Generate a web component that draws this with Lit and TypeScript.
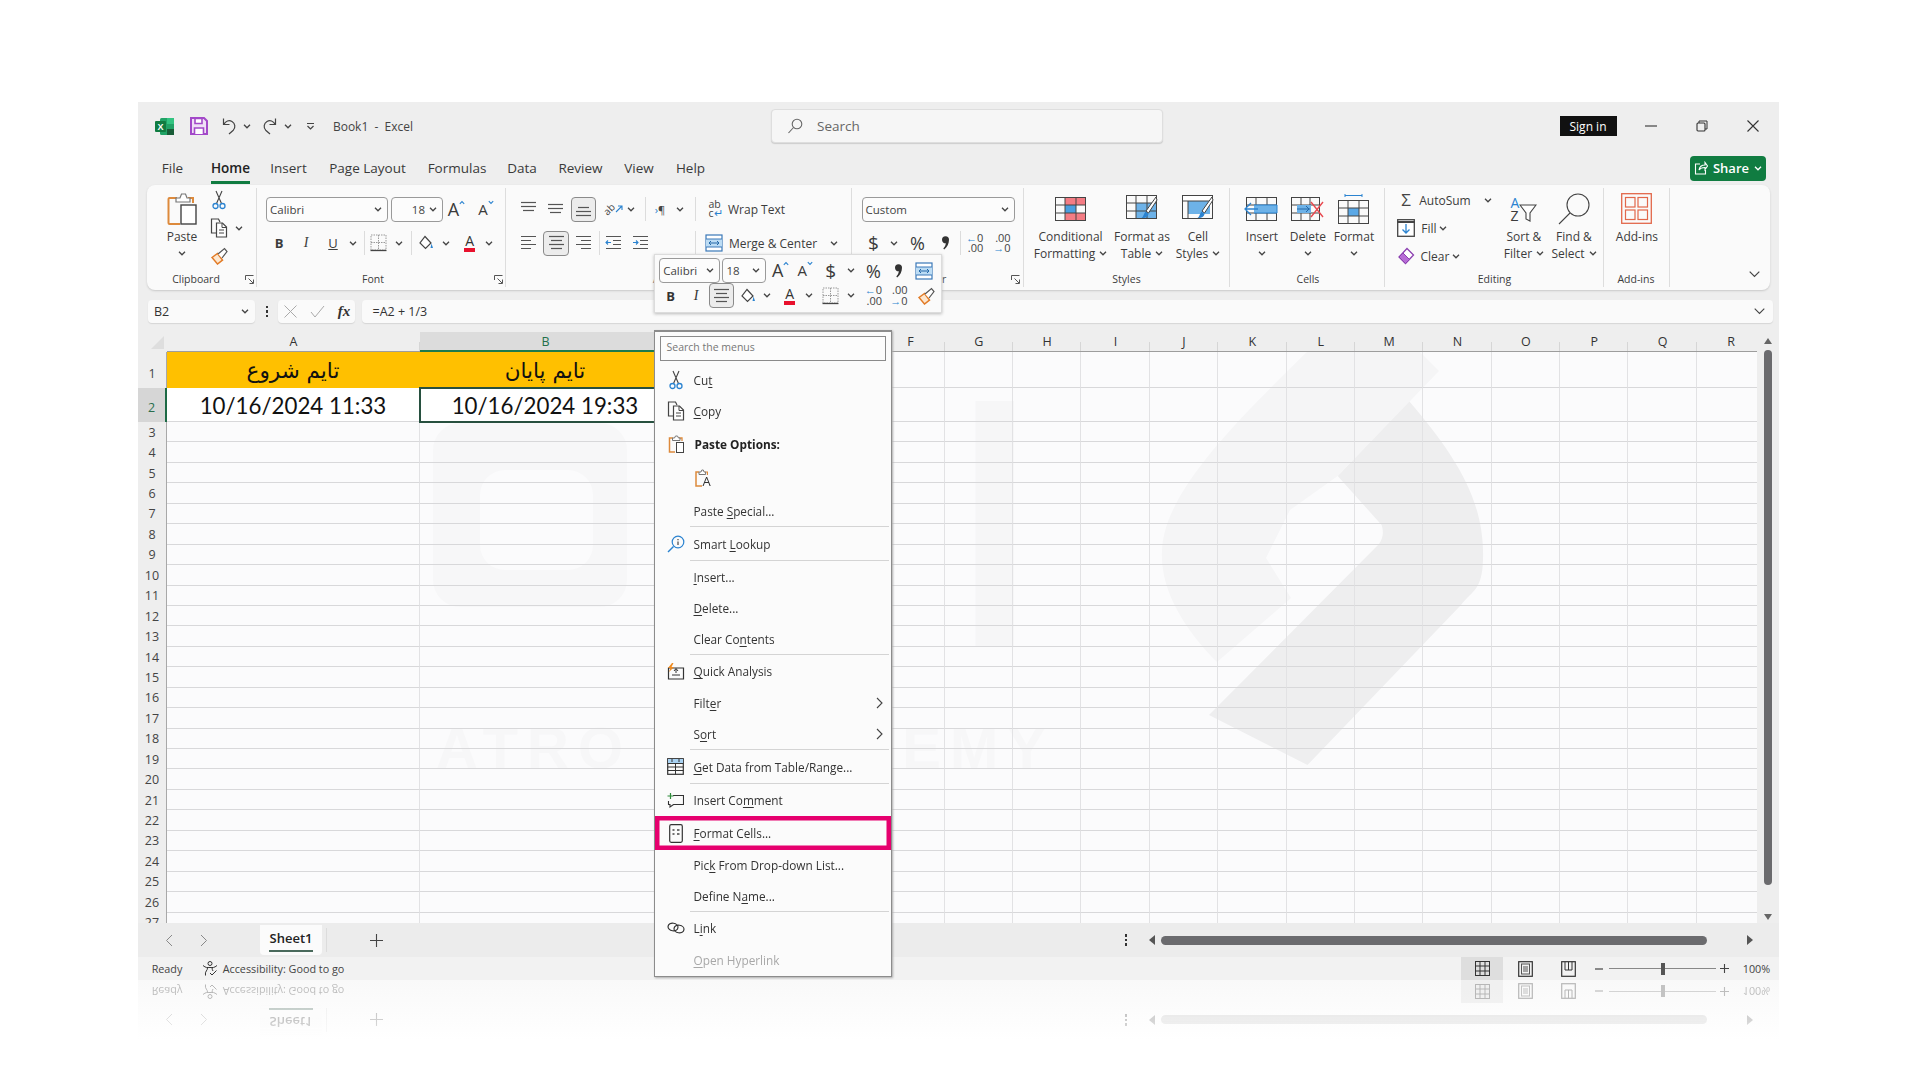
import { LitElement, html, css, svg } from "lit";
import { customElement } from "lit/decorators.js";

const BLUE = "#2b83d0";
const I = (w: number, h: number, c: any) =>
  html`<svg width=${w} height=${h} viewBox="0 0 ${w} ${h}" fill="none">${c}</svg>`;

type It = [number, number, any];
const place = (start: number, items: It[]) => {
  let cur = start;
  return items.map(([c, w, t]) => {
    const ml = c - w / 2 - cur;
    cur = c + w / 2;
    return html`<span class="cell" style="width:${w}px;margin-left:${ml.toFixed(1)}px">${t}</span>`;
  });
};
const CH = I(8, 5, svg`<path d="M1 .8l3 3 3-3" stroke="#444" stroke-width="1.3"/>`);
const CHW = I(8, 5, svg`<path d="M1 .8l3 3 3-3" stroke="#fff" stroke-width="1.3"/>`);

const excel = I(19, 17, svg`
  <rect x="5" width="14" height="17" rx="1.5" fill="#21a366"/>
  <rect x="12" width="7" height="6" fill="#33c481"/><rect x="12" y="11" width="7" height="6" fill="#185c37"/>
  <rect y="3" width="11" height="11" rx="1" fill="#107c41"/>
  <text x="5.5" y="11.5" text-anchor="middle" font-size="9" font-weight="700" font-family="Liberation Sans" fill="#fff">X</text>`);
const save = I(18, 18, svg`
  <path d="M1 1h13l3 3v13H1z" fill="#efe0f6" stroke="#a349c9" stroke-width="2"/>
  <path d="M5 1.500h7v5H5zM4.500 17v-6h9v6" fill="#fff" stroke="#a349c9" stroke-width="1.6"/>`);
const undo = I(18, 18, svg`<path d="M3.500 1.500v6h6M3.800 7.500C5.500 4 9 2.800 12 4.500c3.300 2 3.700 6 1.300 8.700L9 17" stroke="#444" stroke-width="1.200"/>`);
const redo = I(18, 18, svg`<path d="M14.500 1.500v6h-6M14.200 7.500C12.500 4 9 2.800 6 4.500c-3.300 2-3.700 6-1.300 8.700L9 17" stroke="#444" stroke-width="1.200"/>`);
const qat = I(9, 9, svg`<path d="M1 1.500h7M1.500 4l3 3 3-3" stroke="#444" stroke-width="1.200"/>`);

const pasteBig = I(30, 33, svg`
  <path d="M10 6H2.500a1 1 0 0 0-1 1v24a1 1 0 0 0 1 1H13" stroke="#dd8a3c" stroke-width="2"/>
  <path d="M21 6h5v5" stroke="#dd8a3c" stroke-width="2"/>
  <path d="M9 6h4l1.500-4h4L20 6h3v4H9z" fill="#fff" stroke="#777" stroke-width="1.200"/>
  <rect x="14" y="13" width="15" height="19" fill="#fff" stroke="#444" stroke-width="1.400"/>`);
const cut = I(14, 20, svg`
  <path d="M4 1l5.500 12.500M10 1L4.500 13.500" stroke="#444" stroke-width="1.100"/>
  <circle cx="3.500" cy="16" r="2.500" stroke="${BLUE}" stroke-width="1.300"/><circle cx="10.500" cy="16" r="2.500" stroke="${BLUE}" stroke-width="1.300"/>`);
const copy = I(18, 20, svg`
  <path d="M6 15H1.500V1h7l1.500 3" stroke="#444" stroke-width="1.200"/>
  <path d="M6.500 5h6l4 4v10h-10z" fill="#fff" stroke="#444" stroke-width="1.200"/>
  <path d="M12 5v4.500h4.500M9 12h5M9 15h5" stroke="#444"/>`);
const painter = I(18, 18, svg`
  <path d="M2 10.500l5.500-4 5 6.500-5 4z" fill="#fde7cf" stroke="#e27b26" stroke-width="1.500"/>
  <path d="M8 7l6.500-5.500 2.500 3L12 11" fill="#fff" stroke="#555" stroke-width="1.200"/>`);
const borders = I(17, 18, svg`
  <path d="M1 1h15v15H1zM8.500 1v15M1 8.500h15" stroke="#999" stroke-dasharray="1.500 1"/>
  <path d="M.5 16.500h16" stroke="#444" stroke-width="1.300"/>`);
const fill = I(16, 16, svg`
  <path d="M7 1.500L13 8l-5.500 5.500L2 8z" fill="#fff" stroke="#444" stroke-width="1.200"/>
  <path d="M12.500 13l1-4.500 1.500 4.500z" fill="${BLUE}"/>`);
const lines = (rows: [number, number][], w = 17, h = 16) =>
  I(w, h, svg`${rows.map(([y, x]) => svg`<path d="M${x} ${y}H${w - x}" stroke="#555" stroke-width="1.200"/>`)}`);
const ltop = lines([[1.5, 1], [5.5, 1], [9.5, 3]]);
const lmid = lines([[3.5, 1], [7.5, 1], [11.5, 3]]);
const lbot = lines([[6.5, 3], [10.5, 1], [14.5, 1]]);
const lcen = lines([[1.5, 1], [5.5, 3], [9.5, 1], [13.5, 3]]);
const leftL = I(17, 16, svg`<path d="M1 1.500h15M1 5.500h10M1 9.500h15M1 13.500h10" stroke="#555" stroke-width="1.200"/>`);
const rightL = I(17, 16, svg`<path d="M1 1.500h15M6 5.500h10M1 9.500h15M6 13.500h10" stroke="#555" stroke-width="1.200"/>`);
const indL = I(17, 16, svg`<path d="M1 1.500h15M8 5.500h8M8 9.500h8M1 13.500h15" stroke="#555" stroke-width="1.100"/><path d="M6 7.500H1M3 5.500l-2 2 2 2" stroke="${BLUE}" stroke-width="1.100"/>`);
const indR = I(17, 16, svg`<path d="M1 1.500h15M8 5.500h8M8 9.500h8M1 13.500h15" stroke="#555" stroke-width="1.100"/><path d="M1 7.500h5M4 5.500l2 2-2 2" stroke="${BLUE}" stroke-width="1.100"/>`);
const merge = I(18, 18, svg`
  <rect x="1" y="1" width="16" height="16" fill="#fff" stroke="#3a78b8" stroke-width="1.200"/>
  <rect x="1" y="5" width="16" height="8" fill="#bcdcf4"/><path d="M1 5h16M1 13h16" stroke="#3a78b8"/>
  <path d="M4 9h10M6 7l-2 2 2 2M12 7l2 2-2 2" stroke="#2468a8"/>`);
const comma = I(9, 14, svg`<path d="M1 3.800a3.500 3.500 0 1 1 7 0c0 4-1.800 7.200-4.800 9.700l-.9-1c1.400-1.400 2.300-3 2.500-5.200A3.500 3.500 0 0 1 1 3.800z" fill="#333"/>`);
const gridLines = (w: number, h: number, vs: number[], hs: number[]) => svg`
  <rect x=".5" y=".5" width=${w - 1} height=${h - 1} stroke="#444"/>
  ${vs.map((x) => svg`<path d="M${x} 0V${h}" stroke="#444"/>`)}
  ${hs.map((y) => svg`<path d="M0 ${y}H${w}" stroke="#444"/>`)}`;
const brush = svg`<path d="M30 2L20 16l2.500 2L31 5z" fill="#fff" stroke="#444"/><path d="M19.500 16.500l3 2.500c-.5 3-3.500 4.500-7 4 2-1 2-4 4-6.500z" fill="${BLUE}"/>`;
const cfIcon = I(31, 24, svg`
  <rect x="10" y="0" width="20" height="8" fill="#f47c84"/><rect x="10" y="16" width="20" height="8" fill="#f47c84"/>
  <rect x="10" y="8" width="11" height="8" fill="#4a9fe0"/>${gridLines(31, 24, [10, 21], [8, 16])}`);
const tblIcon = I(32, 27, svg`
  <rect x="10" y="8" width="20" height="15" fill="#6db2e8"/>${gridLines(31, 24, [10, 21], [8, 16])}${brush}`);
const cellIcon = I(32, 27, svg`
  <rect x="1" y="1" width="29" height="6" fill="#fff"/><rect x="6" y="6" width="22" height="13" fill="#6db2e8"/>
  <rect x=".5" y=".5" width="30" height="23" stroke="#444"/><path d="M0 6h31M6 6v18" stroke="#444"/>${brush}`);
const insertIcon = I(35, 24, svg`
  <g transform="translate(2 0)">${gridLines(31, 24, [10, 21], [8, 16])}</g>
  <rect x="10" y="8" width="23" height="8" fill="#6db2e8"/><path d="M10 8h23v8H10" stroke="#2b83d0"/>
  <path d="M14 12H2M7 6l-6 6 6 6" stroke="${BLUE}" stroke-width="1.300"/>`);
const deleteIcon = I(33, 24, svg`
  ${gridLines(29, 24, [10, 19], [8, 16])}<rect x="6" y="8" width="14" height="8" fill="#6db2e8"/>
  <path d="M6 12h13M15 9l3 3-3 3" stroke="#2468a8"/><path d="M20 5l12 15M32 5L20 20" stroke="#e8484f" stroke-width="1.400"/>`);
const formatIcon = I(31, 30, svg`
  <path d="M7 1.500h17M7 0v3M24 0v3" stroke="#2b83d0"/>
  <g transform="translate(0 6)"><rect x="10" y="8" width="11" height="8" fill="#5aa8e6"/>${gridLines(31, 24, [10, 21], [8, 16])}</g>`);
const fillI = I(18, 18, svg`<rect x=".7" y=".7" width="16.600" height="16.600" fill="#fff" stroke="#444" stroke-width="1.300"/><path d="M0 3h18" stroke="#444" stroke-width="2"/><path d="M9 5v9M5.500 10.500L9 14l3.500-3.500" stroke="${BLUE}" stroke-width="1.300"/>`);
const clearI = I(18, 18, svg`<path d="M10 1.500l6.500 6.500-8 8.500L2 10z" fill="#fff" stroke="#8b3fb0" stroke-width="1.300"/><path d="M2 10l4-4 6.500 6.500-4 4z" fill="#b76cd6" stroke="#8b3fb0"/>`);
const funnel = I(18, 18, svg`<path d="M1 1h16l-6 8v8l-4-2V9z" fill="#fff" stroke="#444" stroke-width="1.100"/>`);
const findI = I(32, 32, svg`<circle cx="20" cy="12" r="11" stroke="#444" stroke-width="1.100"/><path d="M12 20L1 31" stroke="#444" stroke-width="1.100"/>`);
const addin = I(31, 31, svg`
  <rect x=".7" y=".7" width="29.600" height="29.600" stroke="#e2674a" stroke-width="1.300"/>
  <rect x="4.500" y="4.500" width="9.500" height="9.500" stroke="#e2674a" stroke-width="1.200"/><rect x="17" y="4.500" width="9.500" height="9.500" stroke="#e2674a" stroke-width="1.200"/>
  <rect x="4.500" y="17" width="9.500" height="9.500" stroke="#e2674a" stroke-width="1.200"/><rect x="17" y="17" width="9.500" height="9.500" stroke="#e2674a" stroke-width="1.200"/>`);
const launcher = I(9, 9, svg`<path d="M.5 5V.5H8.500M3.500 3.500L8 8M8.500 4.500v4h-4" stroke="#555"/>`);
const searchI = I(16, 16, svg`<circle cx="10" cy="6" r="4.800" stroke="#666" stroke-width="1.100"/><path d="M6.500 9.500L1.500 15" stroke="#666" stroke-width="1.100"/>`);
const shareI = I(14, 14, svg`<path d="M6 3H1.500v10h10V9M5 9c.5-3 2.500-5 6-5V1.500L13.500 5 11 8.500V6.500C8 6.500 6 7.500 5 9z" stroke="#fff" stroke-width="1.100"/>`);

const fa = (sz: string, up: boolean) => html`<span class="fa ${sz}">A${I(6, 5, svg`<path d="${up ? "M.8 3.800L3 1.500l2.200 2.300" : "M.8 1.200L3 3.500l2.200-2.300"}" stroke="${BLUE}" stroke-width="1.100"/>`)}</span>`;
const fc = html`<span class="fc">A</span>`;
const incD = html`<span class="dec"><span><b>←</b>0</span><span>.00</span></span>`;
const decD = html`<span class="dec"><span>.00</span><span><b>→</b>0</span></span>`;
const dollar = html`<span class="sym d">$</span>`;
const pct = html`<span class="sym p">%</span>`;
const vsep = html`<span class="vs"></span>`;
const sel = (t: any) => html`<span class="sel">${t}</span>`;
const box = (t: string, cls = "") => html`<span class="dd ${cls}"><span>${t}</span>${CH}</span>`;

const big = (icon: any, l1: string, l2?: string) => html`<span class="big"><span class="bi">${icon}</span>
  <span class="ln">${l1}</span><span class="ln">${l2 ? html`${l2} ` : ""}${CH}</span></span>`;

const wm = svg`
  <path d="M1409 401C1455 455 1485 500 1483 560C1482 590 1473 590 1461 605L1307.500 765L1209 715L1379 544C1383 538 1384 532 1381.600 525L1337.700 476z" fill="#eeeeef"/>
  <path d="M1360 300L1423 355L1439 371L1337.700 476L1290 510L1266 558L1291 598L1217 662C1185 630 1160 590 1162 551C1164 480 1270 390 1360 300z" fill="#f5f5f6"/>
  <rect x="975.600" y="401" width="38.400" height="245" fill="#f6f6f7"/>
  <path fill-rule="evenodd" d="M460 423H600a27 27 0 0 1 27 27V580a27 27 0 0 1-27 27H460a27 27 0 0 1-27-27V450a27 27 0 0 1 27-27zM505 470a25 25 0 0 0-25 25v50a25 25 0 0 0 25 25h63a25 25 0 0 0 25-25v-50a25 25 0 0 0-25-25z" fill="#f7f7f8"/>
  <text x="436" y="768" font-family="Liberation Sans" font-weight="700" font-size="58" letter-spacing="9" fill="#f7f7f8">ATRO</text>
  <text x="1055" y="768" text-anchor="end" font-family="Liberation Sans" font-weight="700" font-size="58" letter-spacing="9" fill="#f7f7f8">EMY</text>`;

const colNames = "ABCDEFGHIJKLMNOPQR".split("");
const hiddenCols = "CDE";

type MI = { t?: string; i?: any; h?: number; k?: string; arrow?: boolean };
const pasteSm = I(16, 18, svg`
  <path d="M5 3H1.500v14H7" stroke="#dd8a3c" stroke-width="1.500"/><path d="M11 3h3v3" stroke="#dd8a3c" stroke-width="1.300"/>
  <path d="M4.500 3h2l1-2h2l1 2h1.500v2.500h-7.500z" fill="#fff" stroke="#777"/><rect x="8.500" y="7.500" width="7" height="10" fill="#fff" stroke="#444"/>`);
const pasteA = html`<span class="pa">${I(13, 18, svg`<path d="M4 3H1v14h6" stroke="#dd8a3c" stroke-width="1.500"/><path d="M10 3h2.500v3" stroke="#dd8a3c" stroke-width="1.200"/><path d="M4 3h2l.8-2h1.500l.8 2h1.500v2.500H4z" fill="#fff" stroke="#777"/>`)}<span>A</span></span>`;
const lookI = I(18, 18, svg`<circle cx="11" cy="7" r="5.800" stroke="${BLUE}" stroke-width="1.200"/><path d="M6.500 11.500L1 17" stroke="${BLUE}" stroke-width="1.400"/><path d="M11 6.500v3.500M11 4v1.200" stroke="#444" stroke-width="1.200"/>`);
const quickI = I(18, 17, svg`<path d="M1.500 5h15v11h-15z" stroke="#333" stroke-width="1.200"/><path d="M5 12h8M9 6v4M7 8l2-2.500L11 8" stroke="#333"/><path d="M5 0L1 5h2.500L2 9l5-5H4.500L6.500 0z" fill="#ee8a1f"/>`);
const tableI = I(17, 17, svg`<rect x=".7" y=".7" width="15.600" height="15.600" stroke="#333" stroke-width="1.200"/><rect x="1" y="1" width="15" height="4.500" fill="#a9d2f2"/><path d="M.5 5.500h16M.5 9h16M.5 12.500h16M8.500 5.500v11M5 1v3M12 1v3" stroke="#333"/>`);
const commentI = I(17, 15, svg`<path d="M6 2.500h10.500v9H6.500L3 14v-2.500H1.500V8" stroke="#333" stroke-width="1.100"/><path d="M3.500 0v6M.5 3h6" stroke="#2e8b3a" stroke-width="1.200"/>`);
const fmtI = I(14, 19, svg`<rect x=".7" y=".7" width="12.600" height="17.600" rx="1.500" stroke="#333" stroke-width="1.200"/><path d="M3.500 6h2M3.500 10h2M8 6h2.500M8 10h2.500" stroke="#444" stroke-width="1.500"/>`);
const linkI = I(18, 12, svg`<ellipse cx="6" cy="5" rx="5" ry="3.800" transform="rotate(8 6 5)" stroke="#333" stroke-width="1.200"/><ellipse cx="12" cy="7" rx="5" ry="3.800" transform="rotate(8 12 7)" stroke="#333" stroke-width="1.200"/>`);

const menuData: MI[] = [
  { t: "Cu_t", i: cut, h: 31 },
  { t: "_Copy", i: copy, h: 31 },
  { t: "Paste Options:", i: pasteSm, h: 35, k: "head" },
  { i: pasteA, h: 34, k: "pi" },
  { t: "Paste _Special...", h: 31 },
  { k: "div" },
  { t: "Smart _Lookup", i: lookI, h: 33 },
  { k: "div" },
  { t: "_Insert...", h: 31 },
  { t: "_Delete...", h: 31 },
  { t: "Clear Co_ntents", h: 31 },
  { k: "div" },
  { t: "_Quick Analysis", i: quickI, h: 32 },
  { t: "Filt_er", h: 31, arrow: true },
  { t: "S_ort", h: 31, arrow: true },
  { k: "div" },
  { t: "_Get Data from Table/Range...", i: tableI, h: 33 },
  { k: "div" },
  { t: "Insert Co_mment", i: commentI, h: 32 },
  { t: "_Format Cells...", i: fmtI, h: 33.5, k: "hl" },
  { t: "Pic_k From Drop-down List...", h: 30.5 },
  { t: "Define N_ame...", h: 30.5 },
  { k: "div" },
  { t: "L_ink", i: linkI, h: 33 },
  { t: "_Open Hyperlink", h: 31, k: "off" },
];
const label = (t: string) => {
  const p = t.indexOf("_");
  if (p < 0) return t;
  return html`${t.slice(0, p)}<u>${t[p + 1]}</u>${t.slice(p + 2)}`;
};

@customElement("app-root")
export class AppRoot extends LitElement {
  static styles = css`
    :host { display: block; width: 1920px; height: 1080px; background: #fff; box-sizing: border-box; padding: 102px 141px 0 138px; overflow: hidden;
      font-family: "Open Sans", "Liberation Sans", sans-serif; color: #333; }
    .win { width: 1641px; height: 878px; background: #eeeeee; position: relative; display: flex; flex-direction: column; }
    .cell { display: inline-flex; flex: none; align-items: center; justify-content: center; white-space: nowrap; }
    .tr { display: flex; align-items: center; height: 34px; }
    /* title */
    .title { height: 48px; display: flex; align-items: center; font-size: 12px; color: #444; flex: none; }
    .search { display: flex; align-items: center; justify-content: flex-start; height: 34px; background: #f6f6f6; border: 1px solid #dedede; border-radius: 4px; box-sizing: border-box; padding-left: 15px; gap: 14px; color: #666; font-size: 13.5px; box-shadow: 0 1px 1px #ccc; }
    .signin { background: #111; color: #fff; font-size: 12px; height: 20px; }
    .tabs { height: 35px; padding-top: 1px; box-sizing: border-box; display: flex; align-items: center; font-size: 13.5px; color: #3a3a3a; flex: none; }
    .tabs .on { font-weight: 600; color: #222; position: relative; }
    .tabs .on::after { content: ""; position: absolute; left: 0; right: 0; bottom: -7px; height: 3px; background: #107c41; }
    .share { background: #107c41; color: #fff; height: 25px; border-radius: 4px; font-size: 13px; font-weight: 600; gap: 5px; }
    /* ribbon */
    .ribbon { margin: 0 9px; width: 1623px; height: 105px; flex: none; box-sizing: border-box; background: #fafafa; border-radius: 8px; box-shadow: 0 1px 2px #c8c8c8; padding: 3px 0; display: flex; font-size: 12px; color: #3c3c3c; position: relative; }
    .group { box-sizing: border-box; border-right: 1px solid #dddddd; height: 99px; padding-top: 4px; flex: none; }
    .top { height: 78px; display: flex; }
    .top > .cell { align-items: flex-start; }
    .gl { height: 18px; display: flex; align-items: center; font-size: 10.5px; color: #3c3c3c; }
    .stack { height: 84px; margin-top: -6px; display: flex; flex-direction: column; flex: none; }
    .stack > div { height: 28px; display: flex; align-items: center; }
    .big { display: flex; flex-direction: column; align-items: center; }
    .bi { height: 33px; margin-bottom: 3px; display: flex; align-items: center; justify-content: center; }
    .ln { height: 17px; line-height: 17px; display: flex; align-items: center; gap: 4px; white-space: nowrap; }
    .dd { display: flex; align-items: center; justify-content: space-between; width: 100%; height: 25px; box-sizing: border-box; border: 1px solid #9a9a9a; border-radius: 4px; background: #fcfcfc; padding: 0 5px 0 3px; font-size: 11.5px; color: #444; }
    .dd.r span { margin-left: auto; margin-right: 4px; }
    .vs { display: block; width: 1px; height: 24px; background: #dcdcdc; }
    .sel { display: flex; align-items: center; justify-content: center; width: 100%; height: 25px; border: 1px solid #8a8a8a; border-radius: 4px; background: #ececec; box-sizing: border-box; }
    .fa { display: inline-flex; align-items: flex-start; font-size: 18px; line-height: 19px; color: #3a3a3a; }
    .fa.s { font-size: 15px; align-items: flex-start; }
    .fc { display: block; font-size: 14px; line-height: 14px; border-bottom: 4px solid #e8112d; padding: 0 1px; color: #333; }
    .b { font-weight: 700; font-size: 13px; }
    .it { font-style: italic; font-family: "Liberation Serif", serif; font-size: 14px; }
    .un { text-decoration: underline; font-size: 13px; }
    .dec { display: flex; flex-direction: column; font-size: 11px; line-height: 10.500px; color: #444; align-items: flex-end; }
    .dec b { color: #2b83d0; font-weight: 400; }
    .sym { font-size: 19px; color: #3a3a3a; }
    .sym.p { font-size: 18px; }
    .orient { display: inline-flex; align-items: center; font-size: 10px; color: #444; }
    .orient span { display: inline-block; transform: rotate(-45deg); }
    .wrapi { display: flex; flex-direction: column; font-size: 10.500px; line-height: 9px; color: #444; }
    .wrapi i { font-style: normal; color: #2b83d0; }
    .rtl { font-size: 11px; color: #444; }
    .rtl i { color: #2b83d0; font-style: normal; }
    .sortI { display: flex; align-items: flex-end; }
    .az { display: flex; flex-direction: column; font-size: 14px; line-height: 13px; }
    .az i { color: #2b83d0; font-style: normal; }
    .collapse { position: absolute; right: 10px; bottom: 12px; display: flex; }
    .sigma { font-size: 17px; line-height: 18px; color: #444; }
    /* formula */
    .fbar { height: 23px; margin: 10px 0 9px; display: flex; align-items: center; flex: none; font-size: 12.500px; color: #333; }
    .fb { height: 23px; background: #fafafa; border-radius: 4px; box-shadow: 0 1px 1px #d5d5d5; box-sizing: border-box; }
    .name { justify-content: space-between; padding: 0 6px; }
    .fx { font-family: "Liberation Serif", serif; font-style: italic; font-weight: 700; font-size: 15px; }
    .form { justify-content: space-between; padding: 0 8px 0 10px; }
    /* sheet */
    .gridwrap { height: 591px; display: flex; flex: none; }
    .sheet { width: 1619px; height: 591px; overflow: hidden; position: relative; background: #fbfbfc; flex: none; }
    .wm { position: absolute; inset: 0; }
    .row { display: flex; position: relative; }
    .hdr { height: 20px; background: #eeeeee; font-size: 12.500px; color: #333; }
    .hdr .c { height: 19px; border-bottom: 1px solid #9d9d9d; border-right: 0; background: linear-gradient(#d6d6d6,#d6d6d6) right bottom / 1px 9px no-repeat; justify-content: center; display: flex; align-items: center; box-sizing: content-box; }
    .hdr .rh { height: 20px; background: #eeeeee; border: 0; position: relative; }
    .hdr .rh i { position: absolute; right: 3px; bottom: 3px; width: 0; height: 0; border-left: 13px solid transparent; border-bottom: 13px solid #dedede; }
    .hdr .c.cur { background: #dcdcdc; color: #22704a; border-bottom: 2px solid #1c7a4d; height: 18px; }
    .rh { width: 29px; flex: none; box-sizing: border-box; background: #eeeeee; border-right: 1px solid #a8a8a8; font-size: 12.500px; color: #444; display: flex; align-items: center; justify-content: center; }
    .rh.act { background: #d6d6d6; color: #2a6e4d; border-right: 2px solid #1c6a45; }
    .c { width: 68.400px; flex: none; box-sizing: border-box; border-right: 1px solid #e2e2e4; border-bottom: 1px solid #d8d8da; }
    .c.A { width: 253px; } .c.B { width: 251px; }
    .h0 { height: 20.450px; } .h1 { height: 36px; } .h2 { height: 34px; }
    .h1 .rh { padding-top: 6px; } .h2 .rh { padding-top: 5px; }
    .h1 .c.A, .h1 .c.B { background: #ffc000; border-color: #ffc000; color: #111; font-family: "DejaVu Sans", sans-serif; font-size: 21.500px; display: flex; align-items: center; justify-content: center; padding-top: 1px; }
    .h2 .c.A, .h2 .c.B { font-family: Lato, sans-serif; font-size: 22.300px; color: #111; display: flex; align-items: center; justify-content: center; background: #fff; padding-top: 1px; }
    .h2 .c.B { outline: 2px solid #27503f; outline-offset: -1px; position: relative; z-index: 1; }
    .vscroll { width: 22px; display: flex; flex-direction: column; align-items: center; padding-top: 6px; box-sizing: border-box; }
    .tu { width: 0; height: 0; border: 4.500px solid transparent; border-top: 0; border-bottom: 6px solid #666; }
    .td { width: 0; height: 0; border: 4.500px solid transparent; border-bottom: 0; border-top: 6px solid #666; margin-top: 29px; }
    .vthumb { width: 8px; height: 535px; background: #6b6b6e; border-radius: 4px; margin-top: 6px; }
    /* bottom */
    .tabbar { height: 34px; display: flex; align-items: center; flex: none; background: #ececec; color: #555; }
    .tab { height: 30px; align-self: flex-start; background: #fbfbfb; border-radius: 0 0 4px 4px; display: flex; flex-direction: column; align-items: center; font-size: 13px; font-weight: 600; color: #222; width: 100%; box-sizing: border-box; padding-top: 4px; }
    .tab i { display: block; width: 44px; height: 2px; background: #4a6a5c; margin-top: 3px; }
    .hs { display: block; width: 100%; height: 9px; border-radius: 5px; background: #6b6b6e; }
    .tl { width: 0; height: 0; border: 5px solid transparent; border-left: 0; border-right: 6px solid #555; }
    .trr { width: 0; height: 0; border: 5px solid transparent; border-right: 0; border-left: 6px solid #555; }
    .dots { display: flex; flex-direction: column; gap: 2px; }
    .dots i { width: 2px; height: 2.500px; background: #333; display: block; }
    .status { height: 23px; display: flex; align-items: center; flex: none; background: #f2f2f2; font-size: 10.800px; color: #444; }
    .vw { height: 23px; }
    .vw.on { background: #dedede; }
    .slider { position: relative; display: block; width: 100%; height: 1px; background: #888; }
    .slider i { position: absolute; left: 50%; top: -5.500px; width: 4px; height: 12px; margin-left: -2px; background: #555; }
    .reflectWrap { height: 60px; width: 1641px; background: linear-gradient(#f9f9f9, #ffffff); overflow: hidden; }
    .reflect { transform: scaleY(-1); height: 57px; opacity: .33; -webkit-mask-image: linear-gradient(to top, #000 40%, rgba(0,0,0,.45)); mask-image: linear-gradient(to top, #000 40%, rgba(0,0,0,.45)); }
    .reflect .tabbar, .reflect .status { background: transparent; }
    .reflect .hs { background: #bdbdbd; }
    /* mini toolbar */
    .mini { position: absolute; left: 515.500px; top: 152px; width: 288px; height: 59px; box-sizing: border-box; background: #fafafa; border: 1px solid #dcdcdc; box-shadow: 0 1px 3px #bbb; padding-top: 3px; z-index: 4; font-size: 11px; }
    .mini .mr { height: 25px; display: flex; align-items: center; }
    /* menu */
    .menu { position: absolute; left: 515.500px; top: 228px; width: 238px; height: 647px; box-sizing: border-box; background: #fbfbfb; border: 1px solid #8c8c8c; border-top-width: 2px; box-shadow: 1px 1px 2px #aaa; z-index: 5; font-size: 11.800px; color: #333; }
    .msearch { margin: 3.500px 5px 3.800px 5px; height: 25px; border: 1px solid #8a8a8a; box-sizing: border-box; font-size: 10.500px; color: #777; display: flex; align-items: center; padding: 0 0 3px 6px; background: #fcfcfc; }
    .mi { display: flex; align-items: center; position: relative; white-space: nowrap; }
    .mic { width: 39px; box-sizing: border-box; padding-left: 3px; display: flex; justify-content: center; flex: none; }
    .mi.head { font-weight: 700; color: #222; }
    .mi.head .mt { margin-left: 1px; }
    .mi.off { color: #a8a8a8; }
    .mi.hl { box-shadow: inset 0 0 0 4.500px #e6006e; }
    .mi .ar { position: absolute; right: 8px; display: flex; }
    .mdiv { height: 1px; margin: 0 2px 0 35px; background: #d4d4d4; }
    .pa { display: flex; align-items: flex-end; font-size: 13px; line-height: 12px; margin-left: -1px; }
    .pa span { margin-left: -5px; }
    .mi.pi { padding-left: 41px; }
    u { text-underline-offset: 2px; }
  `;

  tabbar() {
    return html`<div class="tabbar">${place(138, [
      [169, 10, I(8, 13, svg`<path d="M7 1L1.500 6.500 7 12" stroke="#888" stroke-width="1"/>`)],
      [204, 10, I(8, 13, svg`<path d="M1 1l5.500 5.500L1 12" stroke="#888" stroke-width="1"/>`)],
      [291, 62, html`<span class="tab">Sheet1<i></i></span>`],
      [326, 1, html`<span class="vs"></span>`],
      [376.7, 14, I(13, 13, svg`<path d="M6.500 0v13M0 6.500h13" stroke="#444" stroke-width="1.100"/>`)],
      [1126, 4, html`<span class="dots"><i></i><i></i><i></i></span>`],
      [1152, 8, html`<span class="tl"></span>`],
      [1434, 546, html`<span class="hs"></span>`],
      [1750, 8, html`<span class="trr"></span>`],
    ])}</div>`;
  }
  status() {
    return html`<div class="status">${place(138, [
      [167, 32, "Ready"],
      [210, 16, I(16, 15, svg`<circle cx="8" cy="2.500" r="2" stroke="#333"/><path d="M1 4.500c3 2.500 4 2 7 2s4 .5 7-2M5.500 6.500c.5 3-3 3.500-2 8M10 6.500c0 1.500.5 2.500 1 3.500M8 12l2 2 4.500-4.500" stroke="#333"/>`)],
      [283.5, 124, "Accessibility: Good to go"],
      [1482, 42, html`<span class="cell vw on" style="width:42px">${I(15, 15, svg`<rect x=".5" y=".5" width="14" height="14" stroke="#333"/><path d="M5 0v15M10 0v15M0 5h15M0 10h15" stroke="#333"/>`)}</span>`],
      [1525, 20, I(15, 16, svg`<rect x=".7" y=".7" width="13.600" height="14.600" stroke="#333" stroke-width="1.200"/><rect x="3.500" y="3" width="8" height="10" stroke="#555"/><path d="M5 6h5M5 8h5M5 10h5" stroke="#555"/>`)],
      [1568, 20, I(15, 16, svg`<rect x=".7" y=".7" width="13.600" height="14.600" stroke="#333" stroke-width="1.200"/><path d="M4 1v8h7V1M7.500 1v8" stroke="#333"/>`)],
      [1599, 8, I(8, 2, svg`<path d="M0 1h8" stroke="#444" stroke-width="1.200"/>`)],
      [1662.5, 107, html`<span class="slider"><i></i></span>`],
      [1724.4, 10, I(9, 9, svg`<path d="M4.500 0v9M0 4.500h9" stroke="#444" stroke-width="1.100"/>`)],
      [1756.5, 28, "100%"],
    ])}</div>`;
  }
  titleBar() {
    return html`<div class="title">${place(138, [
      [164, 19, excel],
      [199, 18, save],
      [229, 18, undo],
      [247, 8, CH],
      [270, 18, redo],
      [288, 8, CH],
      [310, 9, qat],
      [373, 86, html`<span>Book1&nbsp; - &nbsp;Excel</span>`],
      [967, 392, html`<span class="search" style="width:392px">${searchI}<span>Search</span></span>`],
      [1588, 57, html`<span class="cell signin" style="width:57px">Sign in</span>`],
      [1651, 12, I(12, 2, svg`<path d="M0 1h12" stroke="#333" stroke-width="1.100"/>`)],
      [1702, 12, I(12, 12, svg`<path d="M3 3V1h8v8H9" stroke="#333"/><rect x="1" y="3" width="8" height="8" rx="1" stroke="#333" stroke-width="1.100"/>`)],
      [1753, 12, I(12, 12, svg`<path d="M.5.5l11 11M11.500.5l-11 11" stroke="#333" stroke-width="1.100"/>`)],
    ])}</div>`;
  }
  tabs() {
    const t: [number, number, string][] = [
      [172.5, 22, "File"], [230.5, 40, "Home"], [288.5, 38, "Insert"], [367.5, 80, "Page Layout"],
      [457, 58, "Formulas"], [522, 30, "Data"], [580.5, 44, "Review"], [639, 31, "View"], [690.5, 30, "Help"],
    ];
    return html`<div class="tabs">${place(138, [
      ...t.map(([c, w, s]) => [c, w, html`<span class=${s === "Home" ? "on" : ""}>${s}</span>`] as It),
      [1728, 76, html`<span class="cell share" style="width:76px">${shareI}<span>Share</span>${CHW}</span>`],
    ])}</div>`;
  }
  group(x: number, w: number, top: any, lbl: It[]) {
    return html`<div class="group" style="width:${w}px"><div class="top">${top}</div><div class="gl">${place(x, lbl)}</div></div>`;
  }
  ribbon() {
    const wrapI = html`<span class="wrapi"><span>ab</span><span>c<i>↵</i></span></span>`;
    const orient = html`<span class="orient"><span>ab</span>${I(8, 8, svg`<path d="M1 7l6-6M3 1h4v4" stroke="${BLUE}" stroke-width="1.100"/>`)}</span>`;
    return html`<div class="ribbon">
      ${this.group(147, 110, html`${place(147, [
        [182, 44, html`<span class="big"><span class="bi">${pasteBig}</span><span class="ln">Paste</span><span class="ln">${CH}</span></span>`],
      ])}<div class="stack">
        <div>${place(204, [[219, 16, cut]])}</div>
        <div>${place(204, [[219, 18, copy], [239, 8, CH]])}</div>
        <div>${place(204, [[219, 18, painter]])}</div>
      </div>`, [[196, 54, "Clipboard"], [249, 9, launcher]])}
      ${this.group(257, 249, html`<div>
        <div class="tr">${place(257, [
          [327, 122, box("Calibri")], [417, 52, box("18", "r")], [456.5, 22, fa("", true)], [486, 20, fa("s", false)],
        ])}</div>
        <div class="tr">${place(257, [
          [279, 14, html`<span class="b">B</span>`], [306, 14, html`<span class="it">I</span>`], [333, 14, html`<span class="un">U</span>`], [353, 8, CH],
          [364.7, 1, vsep], [379, 18, borders], [399, 8, CH], [411.6, 1, vsep], [426, 18, fill], [446, 8, CH], [469.6, 14, fc], [489, 8, CH],
        ])}</div></div>`, [[373, 30, "Font"], [498.6, 9, launcher]])}
      ${this.group(506, 346, html`<div>
        <div class="tr">${place(506, [
          [528, 18, ltop], [555, 18, lmid], [583, 25, sel(lbot)], [613, 22, orient], [631, 8, CH], [645, 1, vsep],
          [660, 18, html`<span class="rtl"><i>›</i>¶</span>`], [680, 8, CH], [695, 1, vsep], [715.5, 16, wrapI], [756.5, 58, "Wrap Text"],
        ])}</div>
        <div class="tr">${place(506, [
          [528, 18, leftL], [556, 26, sel(lcen)], [583, 18, rightL], [599, 1, vsep], [613, 18, indL], [640, 18, indR], [695, 1, vsep],
          [713.5, 18, merge], [773, 92, "Merge & Center"], [834, 8, CH],
        ])}</div></div>`, [[678, 60, "Alignment"]])}
      ${this.group(852, 171.7, html`<div>
        <div class="tr">${place(852, [[938, 153, box("Custom")]])}</div>
        <div class="tr">${place(852, [
          [873.5, 14, dollar], [894, 8, CH], [917.5, 18, pct], [945, 10, comma], [960, 1, vsep], [974.7, 18, incD], [1002, 18, decD],
        ])}</div></div>`, [[926, 50, "Number"], [1015, 9, launcher]])}
      ${this.group(1023.7, 206.3, html`${place(1023.7, [
        [1070.6, 74, big(cfIcon, "Conditional", "Formatting")],
        [1142, 60, big(tblIcon, "Format as", "Table")],
        [1198, 46, big(cellIcon, "Cell", "Styles")],
      ])}`, [[1126.5, 40, "Styles"]])}
      ${this.group(1230, 154.7, html`${place(1230, [
        [1262, 40, big(insertIcon, "Insert")],
        [1308, 44, big(deleteIcon, "Delete")],
        [1354, 44, big(formatIcon, "Format")],
      ])}`, [[1308, 30, "Cells"]])}
      ${this.group(1384.7, 218.9, html`<div class="stack">
        <div>${place(1384.7, [[1406, 18, html`<span class="sigma">Σ</span>`], [1445, 52, "AutoSum"], [1487.6, 8, CH]])}</div>
        <div>${place(1384.7, [[1406, 18, fillI], [1429, 20, "Fill"], [1443, 8, CH]])}</div>
        <div>${place(1384.7, [[1406, 18, clearI], [1435, 32, "Clear"], [1455.6, 8, CH]])}</div>
      </div>${place(1491.6, [
        [1524, 44, big(html`<span class="sortI"><span class="az"><i>A</i><span>Z</span></span>${funnel}</span>`, "Sort &", "Filter")],
        [1574, 44, big(findI, "Find &", "Select")],
      ])}`, [[1494.5, 40, "Editing"]])}
      ${this.group(1603.6, 66.4, html`${place(1603.6, [
        [1637, 50, html`<span class="big"><span class="bi">${addin}</span><span class="ln">Add-ins</span></span>`],
      ])}`, [[1636, 44, "Add-ins"]])}
      <span class="collapse">${I(11, 7, svg`<path d="M.7.7l4.800 4.800L10.300.7" stroke="#444" stroke-width="1.200"/>`)}</span>
    </div>`;
  }
  formula() {
    return html`<div class="fbar">${place(138, [
      [201.5, 107, html`<span class="cell fb name" style="width:107px"><span>B2</span>${CH}</span>`],
      [266.7, 4, html`<span class="dots"><i></i><i></i><i></i></span>`],
      [317, 77, html`<span class="cell fb" style="width:77px;gap:13px">
        ${I(13, 13, svg`<path d="M.5.5l12 12M12.500.5l-12 12" stroke="#aaa"/>`)}
        ${I(15, 13, svg`<path d="M1 7l4 5L14 1" stroke="#aaa"/>`)}
        <span class="fx">fx</span></span>`],
      [1068, 1411, html`<span class="cell fb form" style="width:1411px"><span>=A2 + 1/3</span>${I(11, 7, svg`<path d="M.7.7l4.800 4.800L10.300.7" stroke="#444" stroke-width="1.100"/>`)}</span>`],
    ])}</div>`;
  }
  sheet() {
    const rowCount = 27;
    const cls = (i: number) => (i < 2 ? `c ${colNames[i]}` : "c");
    return html`<div class="gridwrap">
      <div class="sheet">
        <svg class="wm" width="1619" height="591" viewBox="138 332 1619 591">${wm}</svg>
        <div class="row hdr">
          <div class="rh"><i></i></div>
          ${colNames.map((n, i) => html`<div class="${cls(i)} ${n === "B" ? "cur" : ""}">${hiddenCols.includes(n) ? "" : n}</div>`)}
        </div>
        ${Array.from({ length: rowCount }, (_, r) => {
          const h = r === 0 ? "h1" : r === 1 ? "h2" : "h0";
          return html`<div class="row ${h}">
            <div class="rh ${r === 1 ? "act" : ""}">${r + 1}</div>
            ${colNames.map((_n, i) => {
              let t: any = "";
              if (r === 0 && i === 0) t = html`<span dir="rtl">تایم شروع</span>`;
              if (r === 0 && i === 1) t = html`<span dir="rtl">تایم پایان</span>`;
              if (r === 1 && i === 0) t = "10/16/2024 11:33";
              if (r === 1 && i === 1) t = "10/16/2024 19:33";
              return html`<div class=${cls(i)}>${t}</div>`;
            })}
          </div>`;
        })}
      </div>
      <div class="vscroll"><span class="tu"></span><span class="vthumb"></span><span class="td"></span></div>
    </div>`;
  }
  mini() {
    return html`<div class="mini">
      <div class="mr">${place(654.5, [
        [689.7, 61, box("Calibri")], [744.5, 44, box("18")], [780.8, 20, fa("", true)], [805.3, 20, fa("s", false)],
        [830.6, 14, dollar], [850.6, 8, CH], [873.5, 18, pct], [899, 10, comma], [924.5, 18, merge],
      ])}</div>
      <div class="mr">${place(654.5, [
        [670.6, 14, html`<span class="b">B</span>`], [696, 14, html`<span class="it">I</span>`], [721.6, 25, sel(lcen)],
        [748, 18, fill], [767, 8, CH], [789.8, 14, fc], [808.6, 8, CH], [831, 18, borders], [850.6, 8, CH],
        [873.5, 18, incD], [899, 18, decD], [925.7, 18, painter],
      ])}</div>
    </div>`;
  }
  menu() {
    return html`<div class="menu">
      <div class="msearch">Search the menus</div>
      ${menuData.map((m) =>
        m.k === "div"
          ? html`<div class="mdiv"></div>`
          : m.k === "pi"
          ? html`<div class="mi pi" style="height:${m.h}px">${m.i}</div>`
          : html`<div class="mi ${m.k ?? ""}" style="height:${m.h}px">
              <span class="mic">${m.i ?? ""}</span><span class="mt">${label(m.t!)}</span>
              ${m.arrow ? html`<span class="ar">${I(7, 12, svg`<path d="M1 1l5 5-5 5" stroke="#444" stroke-width="1.100"/>`)}</span>` : ""}
            </div>`
      )}
    </div>`;
  }
  render() {
    return html`<div class="win">
      ${this.titleBar()}${this.tabs()}${this.ribbon()}${this.formula()}${this.sheet()}${this.tabbar()}${this.status()}
      ${this.mini()}${this.menu()}
    </div>
    <div class="reflectWrap" aria-hidden="true"><div class="reflect">${this.tabbar()}${this.status()}</div></div>`;
  }
}
